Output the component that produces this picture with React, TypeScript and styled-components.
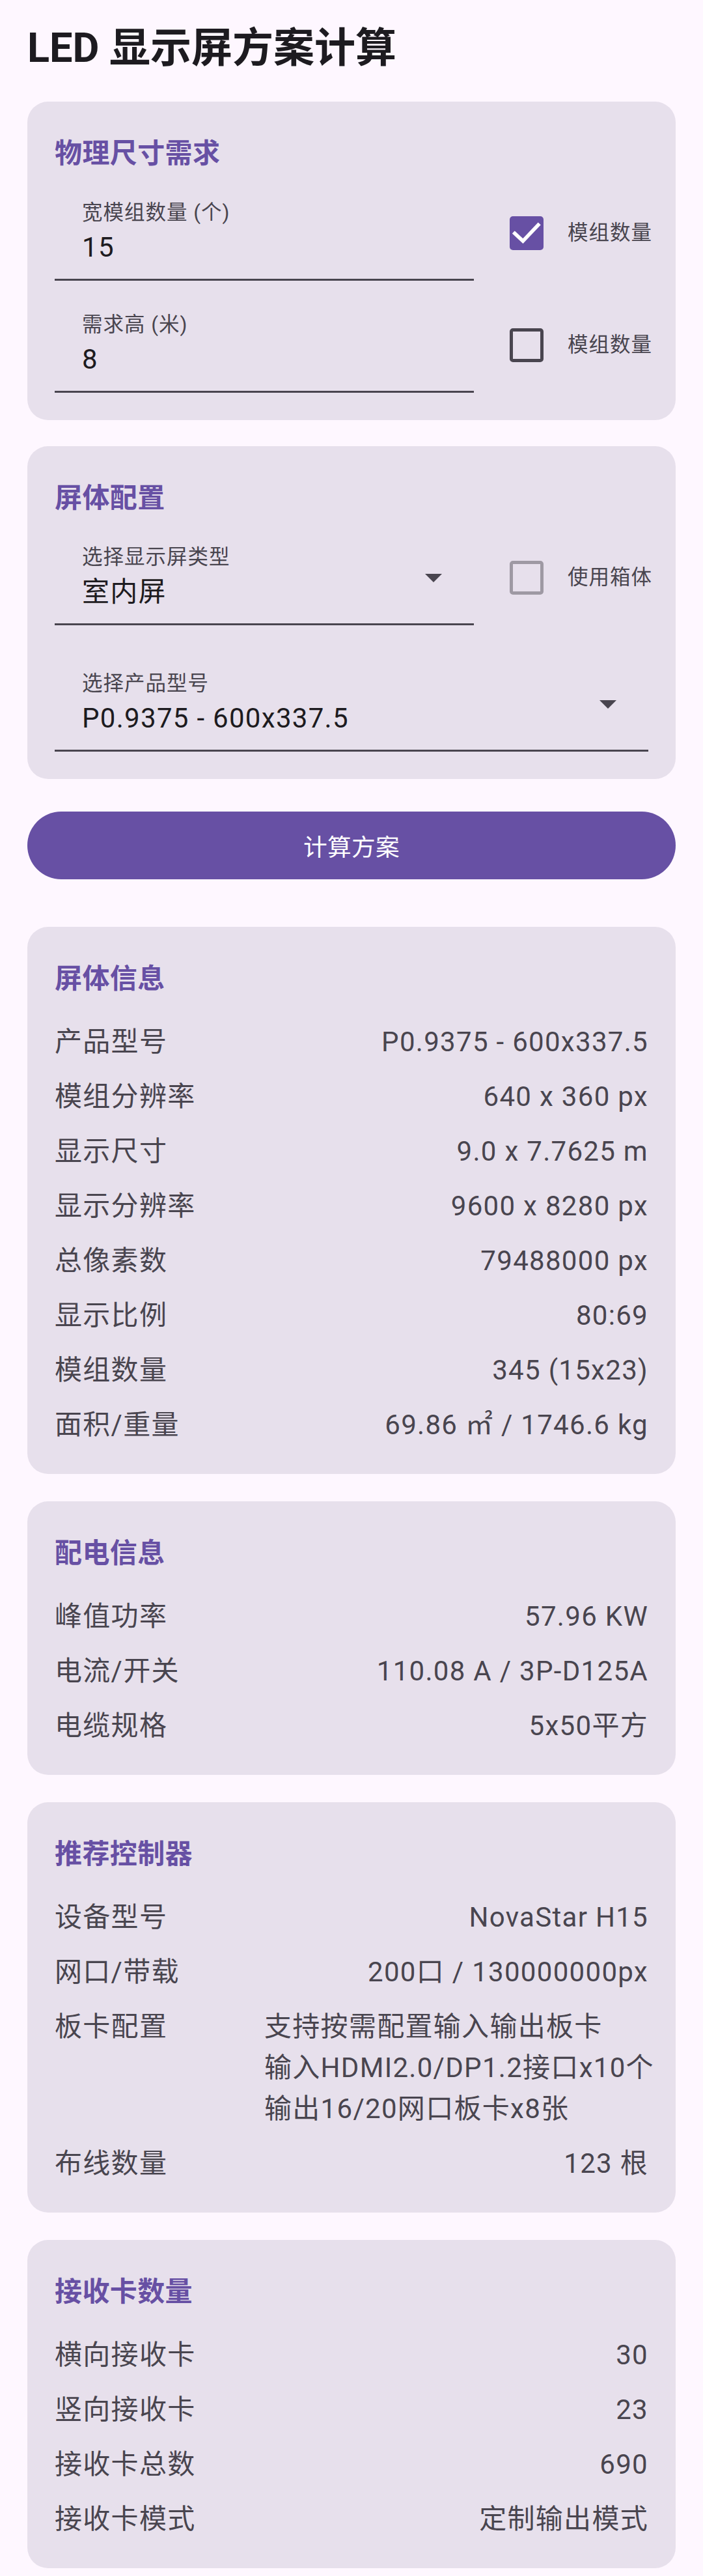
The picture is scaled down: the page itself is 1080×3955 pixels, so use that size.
import React from "react";
import styled, { createGlobalStyle } from "styled-components";

const FONT = `Roboto, "Noto Sans CJK SC", "Noto Sans", sans-serif`;

const GlobalStyle = createGlobalStyle`
  html, body { margin: 0; padding: 0; background: #FEF7FF; }
  body { font-family: ${FONT}; -webkit-font-smoothing: antialiased; }
  *, *::before, *::after { box-sizing: border-box; }
`;

const Page = styled.main`
  width: 1080px;
  display: flex;
  flex-direction: column;
  padding: 32px 42px 40px;
  font-family: ${FONT};
`;

const Title = styled.h1`
  margin: 0 0 40px;
  font-size: 63px;
  line-height: 84px;
  font-weight: 700;
  color: #1D1B20;
  letter-spacing: 0;
`;

const Card = styled.section<{ $pb: number; $mb: number }>`
  display: flex;
  flex-direction: column;
  background: #E7E0EC;
  border-radius: 32px;
  padding: 48px 42px ${(p) => p.$pb}px;
  margin-bottom: ${(p) => p.$mb}px;
`;

const CardTitle = styled.h2<{ $mb: number }>`
  margin: 0 0 ${(p) => p.$mb}px;
  font-size: 42px;
  line-height: 63px;
  font-weight: 700;
  color: #6750A4;
  letter-spacing: 0.4px;
`;

const FieldRow = styled.div<{ $mt?: number }>`
  display: flex;
  align-items: center;
  gap: 18px;
  margin-top: ${(p) => p.$mt ?? 0}px;
`;

const Field = styled.div<{ $dropdown?: boolean }>`
  flex: 1;
  min-width: 0;
  height: 147px;
  display: flex;
  align-items: center;
  padding: 22px ${(p) => (p.$dropdown ? 31 : 42)}px 17px 42px;
  border-bottom: 3px solid #49454F;
`;

const FieldText = styled.div`
  flex: 1;
  min-width: 0;
  display: flex;
  flex-direction: column;
`;

const FieldLabel = styled.span`
  font-size: 31.5px;
  line-height: 42px;
  color: #49454F;
  letter-spacing: 1px;
  white-space: nowrap;
`;

const FieldValue = styled.span`
  font-size: 42px;
  line-height: 63px;
  color: #1D1B20;
  letter-spacing: 1.3px;
  white-space: nowrap;
`;

const ArrowSlot = styled.span`
  width: 63px;
  height: 63px;
  flex-shrink: 0;
  display: flex;
  align-items: center;
  justify-content: center;
`;

const CheckGroup = styled.label`
  width: 250px;
  flex-shrink: 0;
  display: flex;
  align-items: center;
`;

const CheckTarget = styled.span`
  width: 126px;
  height: 126px;
  flex-shrink: 0;
  display: flex;
  align-items: center;
  justify-content: center;
`;

type BoxState = "checked" | "unchecked" | "disabled";

const Box = styled.span<{ $state: BoxState }>`
  width: 52px;
  height: 52px;
  border-radius: 5px;
  display: flex;
  align-items: center;
  justify-content: center;
  background: ${(p) => (p.$state === "checked" ? "#6750A4" : "transparent")};
  border: ${(p) =>
    p.$state === "checked"
      ? "none"
      : p.$state === "disabled"
      ? "5px solid #9E99A3"
      : "5px solid #49454F"};
`;

const CheckText = styled.span`
  font-size: 31.5px;
  line-height: 42px;
  color: #49454F;
  letter-spacing: 1px;
  white-space: nowrap;
`;

const PrimaryButton = styled.button`
  height: 104px;
  margin: 10px 0 73px;
  border: none;
  border-radius: 52px;
  background: #6750A4;
  color: #FFFFFF;
  font-family: ${FONT};
  font-size: 36.75px;
  font-weight: 400;
  letter-spacing: 0.3px;
  cursor: pointer;
`;

const InfoList = styled.div`
  display: flex;
  flex-direction: column;
  gap: 21px;
`;

const InfoRow = styled.div`
  display: flex;
  justify-content: space-between;
  align-items: flex-start;
  font-size: 42px;
  line-height: 63px;
  color: #49454F;
  letter-spacing: 1.3px;
`;

const InfoLabel = styled.span<{ $fixed?: boolean }>`
  flex-shrink: 0;
  white-space: nowrap;
  width: ${(p) => (p.$fixed ? "322px" : "auto")};
`;

const InfoValue = styled.span<{ $block?: boolean }>`
  text-align: ${(p) => (p.$block ? "left" : "right")};
  flex: ${(p) => (p.$block ? "1" : "0 1 auto")};
  white-space: pre;
`;

const DropArrow = () => (
  <svg width="26" height="13" viewBox="0 0 10 5" aria-hidden="true">
    <path d="M0 0 L10 0 L5 5 Z" fill="#49454F" />
  </svg>
);

const CheckMark = () => (
  <svg width="52" height="52" viewBox="0 0 24 24" aria-hidden="true">
    <path
      d="M3.6 12.2 L9.4 17.6 L20.2 6.2"
      fill="none"
      stroke="#FFFFFF"
      strokeWidth="2.6"
      strokeLinecap="square"
    />
  </svg>
);

const Check = ({ state, label }: { state: BoxState; label: string }) => (
  <CheckGroup>
    <CheckTarget>
      <Box $state={state}>{state === "checked" && <CheckMark />}</Box>
    </CheckTarget>
    <CheckText>{label}</CheckText>
  </CheckGroup>
);

type Row = { label: string; value: string; block?: boolean };

const InfoCard = ({ title, rows, mb }: { title: string; rows: Row[]; mb: number }) => (
  <Card $pb={44} $mb={mb}>
    <CardTitle $mb={34}>{title}</CardTitle>
    <InfoList>
      {rows.map((r) => (
        <InfoRow key={r.label}>
          <InfoLabel $fixed={r.block}>{r.label}</InfoLabel>
          <InfoValue $block={r.block}>{r.value}</InfoValue>
        </InfoRow>
      ))}
    </InfoList>
  </Card>
);

const screenRows: Row[] = [
  { label: "产品型号", value: "P0.9375 - 600x337.5" },
  { label: "模组分辨率", value: "640 x 360 px" },
  { label: "显示尺寸", value: "9.0 x 7.7625 m" },
  { label: "显示分辨率", value: "9600 x 8280 px" },
  { label: "总像素数", value: "79488000 px" },
  { label: "显示比例", value: "80:69" },
  { label: "模组数量", value: "345 (15x23)" },
  { label: "面积/重量", value: "69.86 ㎡ / 1746.6 kg" },
];

const powerRows: Row[] = [
  { label: "峰值功率", value: "57.96 KW" },
  { label: "电流/开关", value: "110.08 A / 3P-D125A" },
  { label: "电缆规格", value: "5x50平方" },
];

const controllerRows: Row[] = [
  { label: "设备型号", value: "NovaStar H15" },
  { label: "网口/带载", value: "200口 / 130000000px" },
  {
    label: "板卡配置",
    value: "支持按需配置输入输出板卡\n输入HDMI2.0/DP1.2接口x10个\n输出16/20网口板卡x8张",
    block: true,
  },
  { label: "布线数量", value: "123 根" },
];

const receiverRows: Row[] = [
  { label: "横向接收卡", value: "30" },
  { label: "竖向接收卡", value: "23" },
  { label: "接收卡总数", value: "690" },
  { label: "接收卡模式", value: "定制输出模式" },
];

export default function App() {
  return (
    <>
      <GlobalStyle />
      <Page>
        <Title>LED 显示屏方案计算</Title>

        <Card $pb={42} $mb={40}>
          <CardTitle $mb={17}>物理尺寸需求</CardTitle>
          <FieldRow>
            <Field>
              <FieldText>
                <FieldLabel>宽模组数量 (个)</FieldLabel>
                <FieldValue>15</FieldValue>
              </FieldText>
            </Field>
            <Check state="checked" label="模组数量" />
          </FieldRow>
          <FieldRow $mt={25}>
            <Field>
              <FieldText>
                <FieldLabel>需求高 (米)</FieldLabel>
                <FieldValue>8</FieldValue>
              </FieldText>
            </Field>
            <Check state="unchecked" label="模组数量" />
          </FieldRow>
        </Card>

        <Card $pb={42} $mb={40}>
          <CardTitle $mb={17}>屏体配置</CardTitle>
          <FieldRow>
            <Field $dropdown>
              <FieldText>
                <FieldLabel>选择显示屏类型</FieldLabel>
                <FieldValue>室内屏</FieldValue>
              </FieldText>
              <ArrowSlot>
                <DropArrow />
              </ArrowSlot>
            </Field>
            <Check state="disabled" label="使用箱体" />
          </FieldRow>
          <FieldRow $mt={47}>
            <Field $dropdown>
              <FieldText>
                <FieldLabel>选择产品型号</FieldLabel>
                <FieldValue>P0.9375 - 600x337.5</FieldValue>
              </FieldText>
              <ArrowSlot>
                <DropArrow />
              </ArrowSlot>
            </Field>
          </FieldRow>
        </Card>

        <PrimaryButton type="button">计算方案</PrimaryButton>

        <InfoCard title="屏体信息" rows={screenRows} mb={42} />
        <InfoCard title="配电信息" rows={powerRows} mb={42} />
        <InfoCard title="推荐控制器" rows={controllerRows} mb={42} />
        <InfoCard title="接收卡数量" rows={receiverRows} mb={0} />
      </Page>
    </>
  );
}
